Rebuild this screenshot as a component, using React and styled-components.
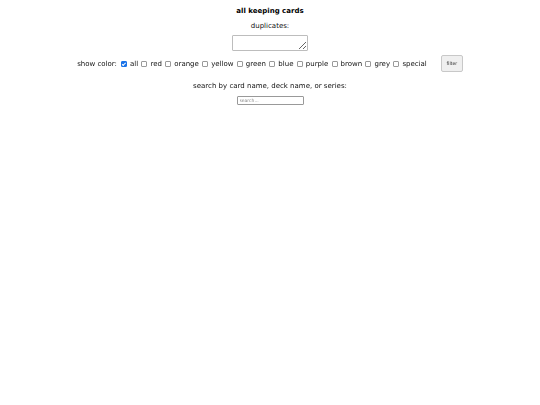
import React from "react";
import styled, { createGlobalStyle } from "styled-components";

const Global = createGlobalStyle`
  html, body { margin: 0; padding: 0; background: #fff; }
  body { font-family: "DejaVu Sans", Verdana, sans-serif; color: #000; -webkit-font-smoothing: antialiased; }
`;

const Page = styled.div`
  display: flex;
  flex-direction: column;
  align-items: center;
  padding-top: 6px;
`;

const Title = styled.div`
  font-size: 7px;
  font-weight: bold;
  line-height: 10px;
`;

const Label = styled.div`
  font-size: 7px;
  line-height: 10px;
  margin-top: ${(p) => p.$mt || 0}px;
  color: #111;
`;

const Area = styled.textarea`
  box-sizing: border-box;
  width: 76px;
  height: 16px;
  margin-top: 4px;
  border: 1px solid #bdbdbd;
  border-radius: 1px;
  resize: vertical;
  padding: 0;
`;

const Row = styled.div`
  display: flex;
  align-items: center;
  margin-top: 4px;
  font-size: 7px;
  color: #111;
`;

const Opt = styled.label`
  display: flex;
  align-items: center;
  margin-left: ${(p) => p.$ml ?? 3.3}px;
`;

const Box = styled.input`
  appearance: none;
  -webkit-appearance: none;
  box-sizing: border-box;
  width: 6px;
  height: 6px;
  margin: 0 3px 0 0;
  border: 1px solid #9a9a9a;
  border-radius: 1px;
  background: #fff;
  position: relative;
  &:checked {
    background: #1a73e8;
    border-color: #1a73e8;
  }
  &:checked::after {
    content: "";
    position: absolute;
    left: 1.2px;
    top: 0px;
    width: 1.2px;
    height: 2.6px;
    border: solid #fff;
    border-width: 0 0.8px 0.8px 0;
    transform: rotate(45deg);
  }
`;

const Btn = styled.button`
  box-sizing: border-box;
  width: 22px;
  height: 17px;
  margin-left: 14px;
  font-family: "DejaVu Sans", sans-serif;
  font-size: 4.5px;
  padding: 0;
  background: #efefef;
  border: 1px solid #c8c8c8;
  border-radius: 2px;
  color: #222;
`;

const Search = styled.input`
  box-sizing: border-box;
  width: 67px;
  height: 9px;
  margin-top: 5px;
  font-size: 4.5px;
  padding: 0 2px;
  border: 1px solid #999;
  border-radius: 1px;
  font-family: "DejaVu Sans", sans-serif;
  &::placeholder { color: #888; }
`;

const colors = ["red", "orange", "yellow", "green", "blue", "purple", "brown", "grey", "special"];

export default function App() {
  return (
    <Page>
      <Global />
      <Title>all keeping cards</Title>
      <Label $mt={5}>duplicates:</Label>
      <Area />
      <Row>
        <span>show color:</span>
        <Opt $ml={4}><Box type="checkbox" defaultChecked />all</Opt>
        {colors.map((c) => (
          <Opt key={c}><Box type="checkbox" />{c}</Opt>
        ))}
        <Btn>filter</Btn>
      </Row>
      <Label $mt={8.5}>search by card name, deck name, or series:</Label>
      <Search placeholder="search..." />
    </Page>
  );
}
